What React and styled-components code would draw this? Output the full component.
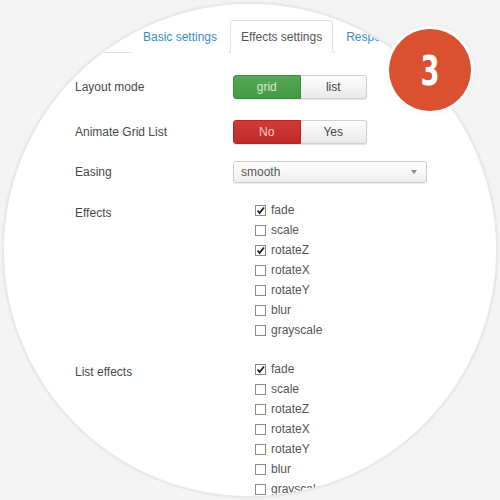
import React from "react";
import styled, { createGlobalStyle } from "styled-components";

const Global = createGlobalStyle`
  html, body { margin: 0; padding: 0; background: #f4f4f4; }
  body { font-family: "Liberation Sans", Arial, sans-serif; }
`;

const Page = styled.div`
  position: relative;
  width: 500px;
  height: 500px;
  overflow: hidden;
  background: #f4f4f4;
`;

const Circle = styled.div`
  box-sizing: border-box;
  margin: 2px;
  width: 496px;
  height: 496px;
  border-radius: 50%;
  border: 2px solid #e9e9e9;
  box-shadow: 0 0 2px rgba(0, 0, 0, 0.06);
  background: #fff;
  overflow: hidden;
  display: flex;
  flex-direction: column;
`;

const TabBar = styled.div`
  margin-top: 16px;
  padding-left: 128px;
  display: flex;
  align-items: flex-end;
  border-bottom: 1px solid #e2e2e2;
`;

const Tab = styled.div`
  height: 33px;
  box-sizing: border-box;
  padding: 0 10px;
  margin-right: 2px;
  margin-bottom: -1px;
  display: flex;
  align-items: center;
  font-size: 12px;
  white-space: nowrap;
  color: ${(p) => (p.$active ? "#555" : "#3b8cc4")};
  background: #fff;
  border: 1px solid ${(p) => (p.$active ? "#e0e0e0" : "transparent")};
  border-bottom-color: ${(p) => (p.$active ? "#fff" : "transparent")};
  border-radius: 4px 4px 0 0;
`;

const Form = styled.div`
  padding-left: 71px;
  display: flex;
  flex-direction: column;
`;

const Row = styled.div`
  display: grid;
  grid-template-columns: 158px 1fr;
  align-items: ${(p) => (p.$top ? "start" : "center")};
  margin-top: ${(p) => p.$mt}px;
`;

const Label = styled.div`
  font-size: 12px;
  color: #4a4a4a;
  padding-top: ${(p) => (p.$top ? "6px" : "0")};
`;

const Toggle = styled.div`
  display: flex;
  width: 134px;
  height: 24px;
  border-radius: 3px;
  box-shadow: 0 1px 1px rgba(0, 0, 0, 0.12);
`;

const ToggleBtn = styled.div`
  flex: 1;
  display: flex;
  align-items: center;
  justify-content: center;
  font-size: 12px;
  box-sizing: border-box;
  ${(p) =>
    p.$on === "green"
      ? `background: linear-gradient(#56a756, #449a44); color: #d3ecd0; border: 1px solid #3f8f3f; border-radius: 3px 0 0 3px;`
      : p.$on === "red"
      ? `background: linear-gradient(#d23a37, #bf2a27); color: #f6cccc; border: 1px solid #b52522; border-radius: 3px 0 0 3px;`
      : `background: linear-gradient(#fdfdfd, #e9e9e9); color: #444; border: 1px solid #cfcfcf; border-left: none; border-radius: 0 3px 3px 0;`}
`;

const Select = styled.div`
  box-sizing: border-box;
  width: 194px;
  height: 22px;
  border: 1px solid #cdcdcd;
  border-radius: 3px;
  background: linear-gradient(#ffffff, #eeeeee);
  box-shadow: 0 1px 1px rgba(0, 0, 0, 0.08);
  display: flex;
  align-items: center;
  justify-content: space-between;
  padding: 0 9px 0 7px;
  font-size: 12px;
  color: #555;
`;

const Arrow = styled.span`
  width: 0;
  height: 0;
  border-left: 3px solid transparent;
  border-right: 3px solid transparent;
  border-top: 4px solid #888;
`;

const CheckList = styled.div`
  display: flex;
  flex-direction: column;
  padding-left: 22px;
`;

const CheckItem = styled.div`
  height: 20px;
  display: flex;
  align-items: center;
  gap: 5px;
  font-size: 12px;
  color: #555;
`;

const Box = styled.span`
  box-sizing: border-box;
  width: 11px;
  height: 11px;
  border: 1px solid #8a8a8a;
  background: #fff;
  display: flex;
  align-items: center;
  justify-content: center;
`;

const Badge = styled.div`
  position: absolute;
  left: 389px;
  top: 29px;
  width: 82px;
  height: 82px;
  border-radius: 50%;
  background: #d9512f;
  box-shadow: 0 0 0 3px #fff, 0 0 4px 3px rgba(0, 0, 0, 0.05);
  display: flex;
  align-items: center;
  justify-content: center;
  color: #fff;
  font-family: "DejaVu Sans Condensed", "DejaVu Sans", sans-serif;
  font-weight: bold;
  font-size: 32px;
`;

const BadgeNum = styled.span`
  display: inline-block;
  transform: scale(0.95, 1.3);
  margin-top: 2px;
`;

const Check = () => (
  <svg width="9" height="9" viewBox="0 0 9 9">
    <path d="M1.5 4.5 L3.6 7 L8 1.5" fill="none" stroke="#222" strokeWidth="1.8" />
  </svg>
);

const effects = [
  ["fade", true],
  ["scale", false],
  ["rotateZ", true],
  ["rotateX", false],
  ["rotateY", false],
  ["blur", false],
  ["grayscale", false],
];

const listEffects = [
  ["fade", true],
  ["scale", false],
  ["rotateZ", false],
  ["rotateX", false],
  ["rotateY", false],
  ["blur", false],
  ["grayscale", false],
];

const Checks = ({ items }) => (
  <CheckList>
    {items.map(([name, on]) => (
      <CheckItem key={name}>
        <Box>{on && <Check />}</Box>
        {name}
      </CheckItem>
    ))}
  </CheckList>
);

export default function App() {
  return (
    <Page>
      <Global />
      <Circle>
        <TabBar>
          <Tab>Basic settings</Tab>
          <Tab $active>Effects settings</Tab>
          <Tab>Responsive</Tab>
        </TabBar>
        <Form>
          <Row $mt={22}>
            <Label>Layout mode</Label>
            <Toggle>
              <ToggleBtn $on="green">grid</ToggleBtn>
              <ToggleBtn>list</ToggleBtn>
            </Toggle>
          </Row>
          <Row $mt={21}>
            <Label>Animate Grid List</Label>
            <Toggle>
              <ToggleBtn $on="red">No</ToggleBtn>
              <ToggleBtn>Yes</ToggleBtn>
            </Toggle>
          </Row>
          <Row $mt={17}>
            <Label>Easing</Label>
            <Select>
              smooth
              <Arrow />
            </Select>
          </Row>
          <Row $mt={17} $top>
            <Label $top>Effects</Label>
            <Checks items={effects} />
          </Row>
          <Row $mt={19} $top>
            <Label $top>List effects</Label>
            <Checks items={listEffects} />
          </Row>
        </Form>
      </Circle>
      <Badge>
        <BadgeNum>3</BadgeNum>
      </Badge>
    </Page>
  );
}
